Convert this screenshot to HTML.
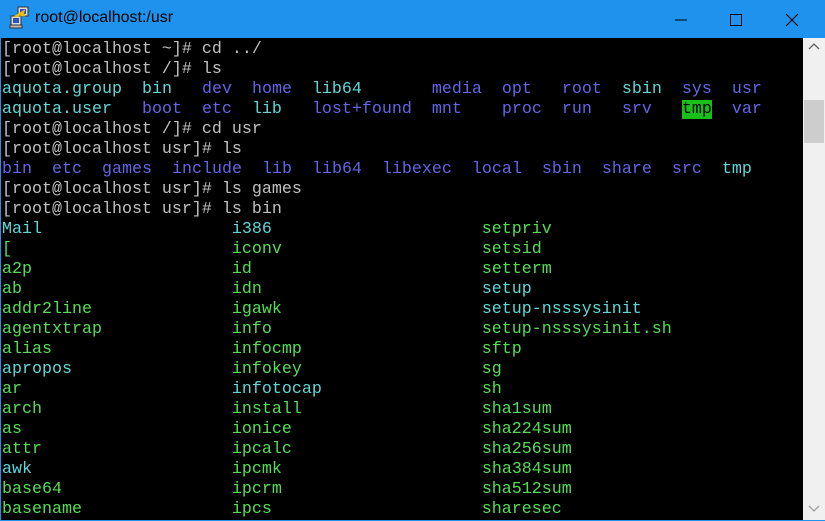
<!DOCTYPE html>
<html><head><meta charset="utf-8"><style>
html,body{margin:0;padding:0;width:825px;height:521px;overflow:hidden;background:#000}
#title{position:absolute;left:0;top:0;width:825px;height:38px;background:#1e92ec;color:#fff;font-family:"Liberation Sans",sans-serif}
#title .t{position:absolute;left:35px;top:9px;font-size:16px;color:#000}
#term{position:absolute;left:0;top:38px;width:803px;height:483px;background:#000;border-left:1px solid #1e92ec;border-bottom:1px solid #1e92ec;box-sizing:border-box;overflow:hidden}
pre{margin:0;padding-left:1px;padding-top:2px;font-family:"Liberation Mono",monospace;font-size:16.67px;line-height:20px;color:#c0c0c0;letter-spacing:0}
.c{color:#5fd7d7}.g{color:#55dd55}.b{color:#6464e6}.h{background:#18c018;color:#000}
#sb{position:absolute;left:803px;top:38px;width:22px;height:483px;background:#f0f0f0;border-bottom:1px solid #1e92ec;box-sizing:border-box}
#thumb{position:absolute;left:1px;top:62px;width:20px;height:43px;background:#cdcdcd}
</style></head><body>
<div id="title">
<svg style="position:absolute;left:9px;top:6px" width="22" height="24" viewBox="0 0 22 24">
<rect x="9" y="1" width="10" height="9" fill="#ddd" stroke="#333"/><rect x="11" y="3" width="6" height="5" fill="#3050c0"/>
<rect x="2" y="10" width="10" height="9" fill="#ddd" stroke="#333"/><rect x="4" y="12" width="6" height="5" fill="#3050c0"/>
<rect x="1" y="19" width="12" height="3" fill="#bbb" stroke="#333"/>
<path d="M6 11 L14 6 L13 9 L16 9" stroke="#f0c000" stroke-width="2.5" fill="none"/>
</svg>
<span class="t">root@localhost:/usr</span>
<svg style="position:absolute;left:672px;top:12px" width="150" height="16">
<line x1="3" y1="8" x2="15" y2="8" stroke="#000" stroke-width="1"/>
<rect x="58.5" y="2.5" width="11" height="11" fill="none" stroke="#000"/>
<line x1="114" y1="2" x2="126" y2="14" stroke="#000"/><line x1="126" y1="2" x2="114" y2="14" stroke="#000"/>
</svg>
</div>
<div id="term"><pre>[root@localhost ~]# cd ../
[root@localhost /]# ls
<span class="c">aquota.group</span>  <span class="c">bin</span>   <span class="b">dev</span>  <span class="b">home</span>  <span class="c">lib64</span>       <span class="b">media</span>  <span class="b">opt</span>   <span class="b">root</span>  <span class="c">sbin</span>  <span class="b">sys</span>  <span class="b">usr</span>
<span class="c">aquota.user</span>   <span class="b">boot</span>  <span class="b">etc</span>  <span class="c">lib</span>   <span class="b">lost+found</span>  <span class="b">mnt</span>    <span class="b">proc</span>  <span class="b">run</span>   <span class="b">srv</span>   <span class="h">tmp</span>  <span class="b">var</span>
[root@localhost /]# cd usr
[root@localhost usr]# ls
<span class="b">bin</span>  <span class="b">etc</span>  <span class="b">games</span>  <span class="b">include</span>  <span class="b">lib</span>  <span class="b">lib64</span>  <span class="b">libexec</span>  <span class="b">local</span>  <span class="b">sbin</span>  <span class="b">share</span>  <span class="b">src</span>  <span class="c">tmp</span>
[root@localhost usr]# ls games
[root@localhost usr]# ls bin
<span class="c">Mail</span>                   <span class="c">i386</span>                     <span class="g">setpriv</span>
<span class="g">[</span>                      <span class="g">iconv</span>                    <span class="g">setsid</span>
<span class="g">a2p</span>                    <span class="g">id</span>                       <span class="g">setterm</span>
<span class="g">ab</span>                     <span class="g">idn</span>                      <span class="c">setup</span>
<span class="g">addr2line</span>              <span class="g">igawk</span>                    <span class="c">setup-nsssysinit</span>
<span class="g">agentxtrap</span>             <span class="g">info</span>                     <span class="g">setup-nsssysinit.sh</span>
<span class="g">alias</span>                  <span class="g">infocmp</span>                  <span class="g">sftp</span>
<span class="c">apropos</span>                <span class="g">infokey</span>                  <span class="g">sg</span>
<span class="g">ar</span>                     <span class="c">infotocap</span>                <span class="g">sh</span>
<span class="g">arch</span>                   <span class="g">install</span>                  <span class="g">sha1sum</span>
<span class="g">as</span>                     <span class="g">ionice</span>                   <span class="g">sha224sum</span>
<span class="g">attr</span>                   <span class="g">ipcalc</span>                   <span class="g">sha256sum</span>
<span class="c">awk</span>                    <span class="g">ipcmk</span>                    <span class="g">sha384sum</span>
<span class="g">base64</span>                 <span class="g">ipcrm</span>                    <span class="g">sha512sum</span>
<span class="g">basename</span>               <span class="g">ipcs</span>                     <span class="g">sharesec</span></pre></div>
<div id="sb"><div id="thumb"></div>
<svg style="position:absolute;left:5px;top:5px" width="12" height="8"><path d="M1 6 L6 1 L11 6" stroke="#606060" fill="none" stroke-width="1.3"/></svg>
<svg style="position:absolute;left:5px;top:466px" width="12" height="8"><path d="M1 2 L6 7 L11 2" stroke="#a0a0a0" fill="none" stroke-width="1.3"/></svg>
</div>
</body></html>
